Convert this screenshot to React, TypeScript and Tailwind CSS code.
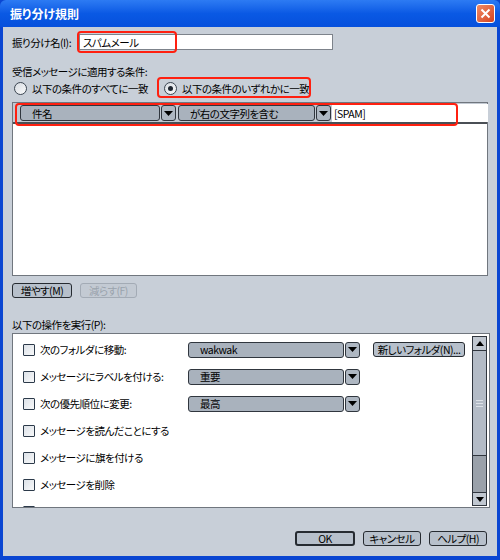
import React from "react";

const font = { fontFamily: '"MS UI Gothic", "Noto Sans CJK JP", sans-serif' };
const txt =
  "text-[10.5px] leading-[13px] tracking-[-0.5px] text-black [font-feature-settings:'palt'] whitespace-nowrap";

function Arrow() {
  return (
    <div className="flex h-full w-[15px] shrink-0 items-center justify-center rounded-[3px] border border-[#30363e] bg-[#aeb7c2]">
      <svg width="9" height="5" viewBox="0 0 9 5">
        <polygon points="0,0 9,0 4.5,5" fill="#000" />
      </svg>
    </div>
  );
}

function Select({ value, className }: { value: string; className: string }) {
  return (
    <div className={"flex h-[16px] gap-[1px] " + className}>
      <div className={"flex flex-1 items-center rounded-[3px] border border-[#30363e] bg-[#a9b2bd] pl-[11px] " + txt}>
        {value}
      </div>
      <Arrow />
    </div>
  );
}

function Check() {
  return (
    <div className="h-[12px] w-[12px] shrink-0 rounded-[1px] border border-[#2c3a4a] bg-gradient-to-br from-[#dde2e8] to-[#f7f8f9]" />
  );
}

function Radio({ on }: { on?: boolean }) {
  return (
    <div className="flex h-[13px] w-[13px] shrink-0 items-center justify-center rounded-full border border-[#3c4652] bg-gradient-to-br from-[#d7dce2] to-[#fbfbfc]">
      {on && <div className="h-[5px] w-[5px] rounded-full bg-[#1f2630]" />}
    </div>
  );
}

function Btn({
  label,
  className,
  disabled,
}: {
  label: React.ReactNode;
  className: string;
  disabled?: boolean;
}) {
  return (
    <div
      className={
        "flex h-[15px] items-center justify-center rounded-[3px] border text-[10.5px] leading-[13px] tracking-[-0.5px] whitespace-nowrap [font-feature-settings:'palt'] " +
        (disabled
          ? "border-[#a3abb5] bg-[#c3cad3] text-[#9aa3ad] "
          : "border-[#262b31] bg-[#b7c0cb] text-black ") +
        className
      }
    >
      {label}
    </div>
  );
}

function ActionRow({ label, children }: { label?: string; children?: React.ReactNode }) {
  return (
    <div className="flex h-[27px] shrink-0 items-center">
      <div className="flex w-[175px] items-center gap-[5px] pl-[10px]">
        <Check />
        {label && <span className={txt}>{label}</span>}
      </div>
      {children}
    </div>
  );
}

export default function App() {
  return (
    <div className="flex h-[560px] w-[500px] flex-col bg-[#0a46d2]" style={font}>
      <div className="flex h-[27px] shrink-0 items-center justify-between rounded-t-[6px] bg-gradient-to-b from-[#2d7bf3] via-[#0a59e4] to-[#0650dc] pl-[10px] pr-[5px]">
        <span className="text-[12px] font-bold text-white [font-feature-settings:'palt']">振り分け規則</span>
        <div className="flex h-[19px] w-[19px] items-center justify-center rounded-[3px] border border-white bg-gradient-to-br from-[#f08a64] to-[#d4411d]">
          <svg width="11" height="11" viewBox="0 0 11 11">
            <path d="M1.5 1.5 L9.5 9.5 M9.5 1.5 L1.5 9.5" stroke="#fff" strokeWidth="2" />
          </svg>
        </div>
      </div>
      <div className="mx-[3px] mb-[4px] flex flex-1 flex-col bg-[#c8cfd8] pl-[9px] pr-[9px]">
        <div className="mt-[7px] flex h-[16px] items-center">
          <span className={"w-[67px] " + txt}>振り分け名(I):</span>
          <div className={"relative flex h-[16px] w-[254px] items-center border border-[#7d838b] bg-white pl-[3px] " + txt}>
            スパムメール
            <div className="absolute left-[-3px] top-[-4px] h-[22px] w-[100px] rounded-[4px] border-2 border-[#ff2010]" />
          </div>
        </div>

        <div className={"mt-[15px] " + txt}>受信メッセージに適用する条件:</div>
        <div className="flex h-[20px] items-center">
          <div className="ml-[2px] flex h-full w-[150px] items-center gap-[5px]">
            <Radio />
            <span className={txt}>以下の条件のすべてに一致</span>
          </div>
          <div className="relative flex h-full items-center gap-[5px]">
            <Radio on />
            <span className={txt}>以下の条件のいずれかに一致</span>
            <div className="absolute left-[-7px] top-[-1px] h-[21px] w-[154px] rounded-[4px] border-2 border-[#ff2010]" />
          </div>
        </div>

        <div className="mt-[4px] flex h-[174px] w-[476px] shrink-0 flex-col border border-[#70767e] bg-white">
          <div className="relative flex h-[21px] items-center border-b-2 border-[#4a4f55] bg-[#c2c9d2] pt-[1px]">
            <div className="flex h-[16px] items-center">
              <Select value="件名" className="ml-[7px] w-[156px]" />
              <Select value="が右の文字列を含む" className="ml-[2px] w-[153px]" />
              <div className={"ml-[1px] flex h-[18px] w-[156px] items-center bg-white pl-[2px] " + txt}>
                [SPAM]
              </div>
            </div>
            <div className="absolute left-[2px] top-[0px] h-[23px] w-[443px] rounded-[4px] border-2 border-[#ff2010]" />
          </div>
        </div>

        <div className="mt-[7px] flex gap-[8px]">
          <Btn label="増やす(M)" className="w-[60px]" />
          <Btn label="減らす(F)" className="w-[57px]" disabled />
        </div>

        <div className={"mt-[20px] " + txt}>以下の操作を実行(P):</div>

        <div className="mt-[2px] flex h-[175px] w-[478px] shrink-0 overflow-hidden border border-[#70767e] bg-white">
          <div className="flex flex-1 flex-col pt-[2px]">
            <ActionRow label="次のフォルダに移動:">
              <Select value="wakwak" className="w-[172px]" />
              <Btn label="新しいフォルダ(N)..." className="ml-[13px] w-[92px]" />
            </ActionRow>
            <ActionRow label="メッセージにラベルを付ける:">
              <Select value="重要" className="w-[172px]" />
            </ActionRow>
            <ActionRow label="次の優先順位に変更:">
              <Select value="最高" className="w-[172px]" />
            </ActionRow>
            <ActionRow label="メッセージを読んだことにする" />
            <ActionRow label="メッセージに旗を付ける" />
            <ActionRow label="メッセージを削除" />
            <ActionRow />
          </div>
          <div className="mr-[2px] mt-[2px] mb-[1px] flex w-[15px] flex-col border border-[#30363e]">
            <div className="flex h-[14px] items-center justify-center border-b border-[#30363e] bg-[#c0c7d0]">
              <svg width="8" height="5" viewBox="0 0 8 5">
                <polygon points="0,5 8,5 4,0" fill="#000" />
              </svg>
            </div>
            <div className="flex h-[105px] flex-col items-center justify-center gap-[2px] border-b border-[#30363e] bg-[#b3bbc6]">
              <div className="h-[1px] w-[7px] bg-[#dde2e8]" />
              <div className="h-[1px] w-[7px] bg-[#dde2e8]" />
              <div className="h-[1px] w-[7px] bg-[#dde2e8]" />
            </div>
            <div className="flex-1 bg-[#9aa1aa]" />
            <div className="flex h-[13px] items-center justify-center border-t border-[#30363e] bg-[#c0c7d0]">
              <svg width="8" height="5" viewBox="0 0 8 5">
                <polygon points="0,0 8,0 4,5" fill="#000" />
              </svg>
            </div>
          </div>
        </div>

        <div className="mt-[23px] flex justify-end gap-[8px] pr-[1px]">
          <Btn label="OK" className="w-[60px] border-2" />
          <Btn label="キャンセル" className="w-[58px]" />
          <Btn label="ヘルプ(H)" className="w-[58px]" />
        </div>
      </div>
    </div>
  );
}
